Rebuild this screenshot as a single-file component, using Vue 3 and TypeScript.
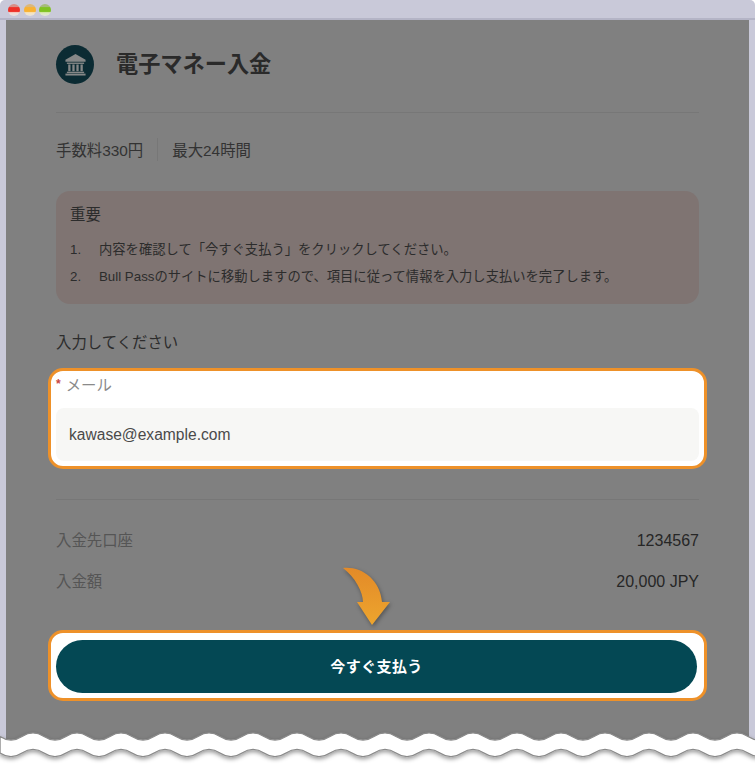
<script setup lang="ts">
const steps: string[] = [
  '内容を確認して「今すぐ支払う」をクリックしてください。',
  'Bull Passのサイトに移動しますので、項目に従って情報を入力し支払いを完了します。',
]

// Builds the torn-paper edge: a band between two parallel waves, 44px period.
function waveBand(top: number, bottom: number, amp: number): string {
  const seg = 22
  const count = 36
  let d = `M0 ${top}`
  for (let i = 0; i < count; i++) {
    const dir = i % 2 === 0 ? 1 : -1
    d += ` Q${i * seg + seg / 2} ${top + dir * amp * 2} ${(i + 1) * seg} ${top}`
  }
  d += ` L${count * seg} ${bottom}`
  for (let i = count - 1; i >= 0; i--) {
    const dir = i % 2 === 0 ? 1 : -1
    d += ` Q${i * seg + seg / 2} ${bottom + dir * amp * 2} ${i * seg} ${bottom}`
  }
  return d + ' Z'
}
const band = waveBand(8.5, 25, 3.6)
</script>

<template>
  <div class="window">
    <div class="titlebar">
      <span class="dot red"></span>
      <span class="dot yellow"></span>
      <span class="dot green"></span>
    </div>
    <div class="panel">
      <header class="head">
        <span class="badge">
          <svg width="23" height="23" viewBox="0 0 24 24">
            <path d="M12 1 L22.5 7 V9 H1.5 V7 Z" fill="#858787" />
            <rect x="3" y="10" width="18" height="1.4" fill="#858787" />
            <rect x="4.4" y="12" width="2.4" height="7" fill="#858787" />
            <rect x="8.7" y="12" width="2.4" height="7" fill="#858787" />
            <rect x="12.9" y="12" width="2.4" height="7" fill="#858787" />
            <rect x="17.2" y="12" width="2.4" height="7" fill="#858787" />
            <rect x="3" y="19.5" width="18" height="1.5" fill="#858787" />
            <rect x="1.5" y="21.5" width="21" height="2" fill="#858787" />
          </svg>
        </span>
        <h1 class="title">電子マネー入金</h1>
      </header>
      <div class="rule first"></div>
      <div class="meta">
        <span>手数料330円</span>
        <span class="sep"></span>
        <span>最大24時間</span>
      </div>
      <section class="notice">
        <div class="notice-title">重要</div>
        <ol class="steps">
          <li v-for="(s, i) in steps" :key="i">
            <span class="num">{{ i + 1 }}.</span><span>{{ s }}</span>
          </li>
        </ol>
      </section>
      <div class="prompt">入力してください</div>
      <div class="mark mark-field">
        <label class="field-label"><span class="req">*</span>メール</label>
        <div class="input">kawase@example.com</div>
      </div>
      <div class="rule second"></div>
      <div class="row first-row"><span class="key">入金先口座</span><span class="val">1234567</span></div>
      <div class="row"><span class="key">入金額</span><span class="val">20,000 JPY</span></div>
      <div class="mark mark-button">
        <button class="pay" type="button">今すぐ支払う</button>
      </div>
      <svg class="arrow" width="50" height="62" viewBox="0 0 50 62">
        <defs>
          <linearGradient id="arrowFill" x1="0" y1="0" x2="0" y2="1">
            <stop offset="0" stop-color="#e38a28" />
            <stop offset="1" stop-color="#eda52e" />
          </linearGradient>
        </defs>
        <path d="M0 1 C18 -1 37 12 39 35 H47 L29 58 L14 35 H20 C20 25 12 10 0 1 Z" fill="url(#arrowFill)" />
      </svg>
    </div>
    <svg class="tear" width="755" height="42" viewBox="0 0 755 42">
      <defs>
        <filter id="tearShadow" x="-5%" y="-30%" width="110%" height="180%">
          <feDropShadow dx="0" dy="2" stdDeviation="2" flood-color="#000" flood-opacity="0.4" />
        </filter>
      </defs>
      <rect x="0" y="17" width="755" height="25" fill="#fff" />
      <path :d="band" fill="#fff" stroke="#8b8b8b" stroke-width="1.4" filter="url(#tearShadow)" />
    </svg>
  </div>
</template>

<style>
body { background: #fff; }
</style>

<style scoped>
.window {
  position: relative;
  width: 755px;
  height: 770px;
  overflow: hidden;
  border-radius: 5px 5px 0 0;
  background: #c9c9d9;
  font-family: "Liberation Sans", "Noto Sans CJK JP", sans-serif;
  color: #2b2b2b;
}
.titlebar {
  height: 20px;
  display: flex;
  align-items: center;
  gap: 3.5px;
  padding: 2px 0 0 8px;
  box-sizing: border-box;
  border-bottom: 2px solid #b4b4c6;
}
.dot {
  width: 12px;
  height: 12px;
  border-radius: 50%;
}
.red { background: linear-gradient(#d98d86 0 22%, #ee3028 30% 62%, #f4d8d0 72%, #e6e2e2 100%); }
.yellow { background: linear-gradient(#dbb77a 0 22%, #f8b233 30% 62%, #f7e3bd 72%, #e6e2dc 100%); }
.green { background: linear-gradient(#a5bb7b 0 22%, #7fc222 30% 62%, #dbe9b5 72%, #e2e6dc 100%); }
.panel {
  position: relative;
  margin: 0 6px;
  height: 750px;
  box-sizing: border-box;
  padding: 25px 50px 0;
  background: #808080;
}
.head {
  display: flex;
  align-items: center;
  gap: 22px;
}
.badge {
  width: 38px;
  height: 39px;
  border-radius: 50%;
  background: #0b2b33;
  display: flex;
  align-items: center;
  justify-content: center;
}
.title {
  margin: 0;
  font-size: 22.2px;
  line-height: 39px;
  font-weight: 700;
  color: #2a2a2a;
}
.rule {
  height: 1px;
  background: #777;
}
.rule.first { margin-top: 28px; }
.meta {
  display: flex;
  align-items: center;
  height: 24px;
  margin-top: 24px;
  font-size: 15.4px;
  color: #333;
}
.sep {
  width: 1px;
  height: 23px;
  margin: 0 14px;
  background: #777;
}
.notice {
  margin-top: 30px;
  height: 113px;
  box-sizing: border-box;
  padding: 14px 14px 0;
  border-radius: 14px;
  background: #7f7472;
}
.notice-title {
  font-size: 15.4px;
  line-height: 20px;
  color: #2c2c2c;
}
.steps {
  list-style: none;
  margin: 11px 0 0;
  padding: 0;
  font-size: 13.3px;
  line-height: 27px;
  color: #2c2c2c;
}
.steps li { display: flex; }
.num { width: 29px; flex: none; }
.prompt {
  margin-top: 28px;
  font-size: 15.4px;
  line-height: 22px;
  color: #2c2c2c;
}
.mark {
  margin: 0 -8px;
  box-sizing: border-box;
  border: 3px solid #ee9129;
  border-radius: 15px;
  background: #fff;
  padding: 0 5px;
}
.mark-field {
  margin-top: 14px;
  height: 101px;
}
.field-label {
  display: block;
  height: 37px;
  font-size: 15.4px;
  line-height: 29px;
  color: #8a8a8a;
}
.req {
  color: #c8473f;
  font-size: 12px;
  font-weight: 700;
  line-height: 12px;
  margin-right: 5px;
  vertical-align: 3px;
}
.input {
  height: 53px;
  line-height: 53px;
  padding-left: 13px;
  border-radius: 8px;
  background: #f7f7f5;
  font-size: 15.6px;
  color: #4a4a4a;
}
.rule.second { margin-top: 30px; }
.row {
  display: flex;
  justify-content: space-between;
  align-items: center;
  height: 20px;
  margin-top: 21px;
  font-size: 15.4px;
}
.first-row { margin-top: 29px; }
.key { color: #555; }
.val { color: #262626; font-size: 16px; padding-top: 3px; }
.mark-button {
  margin-top: 40px;
  height: 71px;
  padding: 7px 7px 0 5px;
}
.pay {
  display: block;
  width: 100%;
  height: 53px;
  border: 0;
  border-radius: 27px;
  padding: 0 0 2px;
  background: #044854;
  color: #fff;
  font: 700 15px "Liberation Sans", "Noto Sans CJK JP", sans-serif;
  letter-spacing: 0.4px;
}
.arrow {
  position: absolute;
  left: 337px;
  top: 547px;
  filter: drop-shadow(1px 2px 2px rgba(0, 0, 0, 0.35));
}
.tear {
  position: absolute;
  left: 0;
  bottom: 0;
  height: 42px;
}
</style>
